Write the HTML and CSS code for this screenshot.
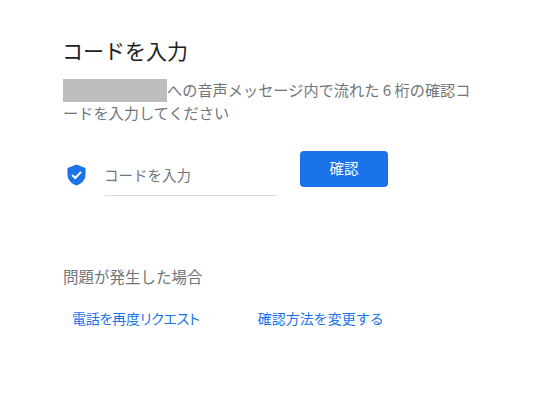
FILE: index.html
```html
<!DOCTYPE html>
<html lang="ja">
<head>
    <meta charset="UTF-8">
    <meta name="viewport" content="width=device-width, initial-scale=1.0">
    <title>コードを入力</title>
    <link rel="stylesheet" href="styles.css">
</head>
<body>
    <main class="panel">
        <h1>コードを入力</h1>
        <p class="message"><span class="redacted"></span>への音声メッセージ内で流れた 6 桁の確認コードを入力してください</p>

        <div class="code-row">
            <svg class="shield" viewBox="0 0 20 23" width="19" height="22" aria-hidden="true">
                <path fill="#1a73e8" d="M10 0.5 L19.5 4 V11 C19.5 16.5 15.5 20.8 10 22.5 C4.5 20.8 0.5 16.5 0.5 11 V4 Z"/>
                <path fill="none" stroke="#fff" stroke-width="2.2" d="M5.4 11.4 L8.7 14.6 L14.8 8.2"/>
            </svg>
            <div class="code-field">コードを入力</div>
            <button class="confirm">確認</button>
        </div>

        <h2>問題が発生した場合</h2>
        <div class="links">
            <a class="retry" href="#">電話を再度リクエスト</a>
            <a href="#">確認方法を変更する</a>
        </div>
    </main>
</body>
</html>
```

FILE: styles.css
```css
body {
    margin: 0;
    background: #fff;
    font-family: "Noto Sans CJK JP", "Noto Sans", sans-serif;
    color: #70757a;
}

.panel {
    width: 410px;
    padding: 36px 0 0 63px;
}

h1 {
    margin: 0 0 15px;
    font-size: 21px;
    line-height: 28px;
    font-weight: 400;
    color: #202124;
    text-indent: -1px;
}

.message {
    margin: 0;
    font-size: 15.2px;
    line-height: 21px;
}

.redacted {
    display: inline-block;
    width: 104px;
    height: 23px;
    vertical-align: top;
    background: #bdbdbd;
}

.code-row {
    display: flex;
    align-items: flex-start;
    margin-top: 28px;
}

.shield {
    margin: 12.5px 0 0 4px;
}

.code-field {
    width: 171px;
    height: 45px;
    margin-left: 19px;
    box-sizing: border-box;
    border-bottom: 1px solid #dadce0;
    font-size: 14.5px;
    line-height: 47px;
    text-indent: -1px;
}

.confirm {
    width: 88px;
    height: 36px;
    margin-left: 24px;
    padding: 0 0 3px;
    border: none;
    border-radius: 4px;
    background: #1a73e8;
    color: #fff;
    font-family: inherit;
    font-size: 14.5px;
}

h2 {
    margin: 70px 0 0;
    font-size: 15.5px;
    line-height: 20px;
    font-weight: 400;
}

.links {
    display: flex;
    gap: 58px;
    margin-top: 22px;
    padding-left: 9px;
    font-size: 14px;
    line-height: 20px;
}

.links a {
    color: #1a73e8;
    text-decoration: none;
}

.retry {
    font-feature-settings: "palt";
    letter-spacing: -0.2px;
}
```
